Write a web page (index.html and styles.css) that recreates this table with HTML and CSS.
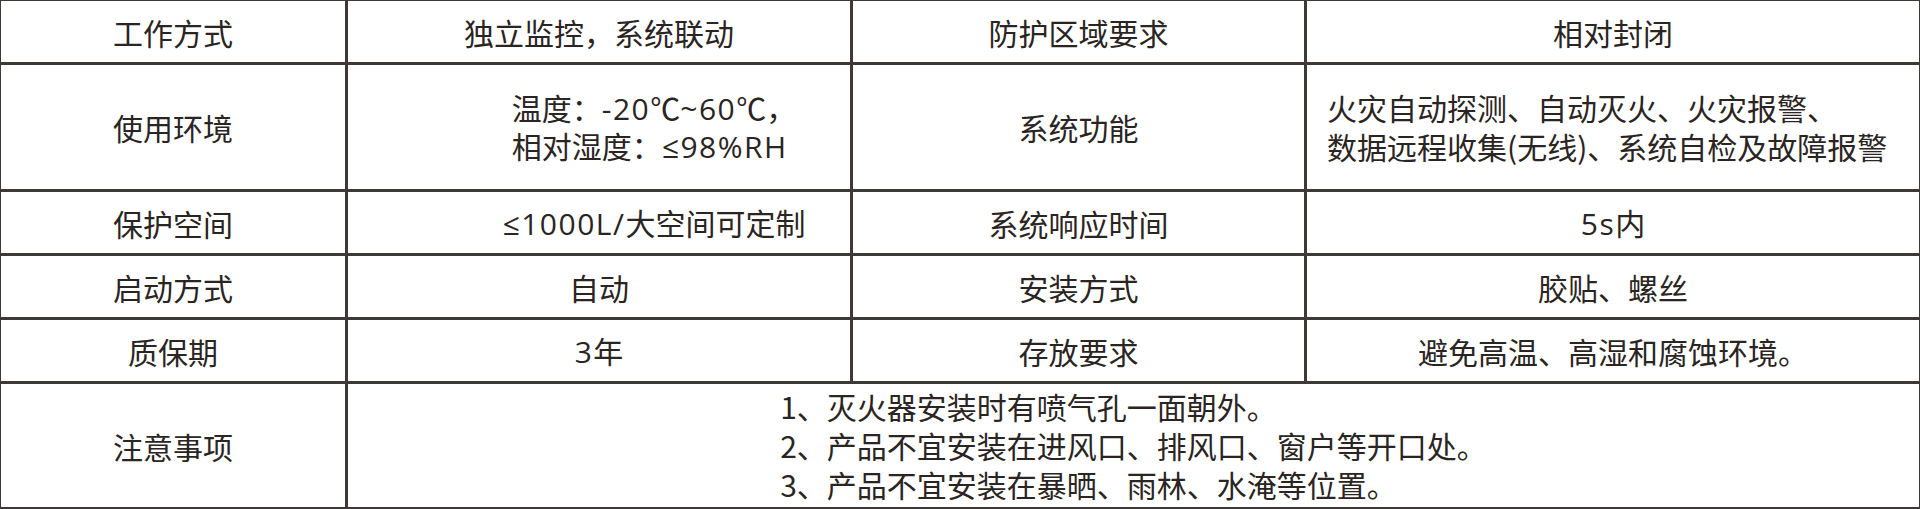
FILE: index.html
```html
<!DOCTYPE html>
<html lang="zh-CN">
<head>
<meta charset="utf-8">
<title>参数表</title>
<link rel="stylesheet" href="styles.css">
</head>
<body>
<table class="spec">
  <colgroup>
    <col class="c1"><col class="c2"><col class="c3"><col class="c4">
  </colgroup>
  <tbody>
    <tr class="r1">
      <td>工作方式</td>
      <td>独立监控，系统联动</td>
      <td>防护区域要求</td>
      <td>相对封闭</td>
    </tr>
    <tr class="r2">
      <td>使用环境</td>
      <td class="shift"><div class="block">温度：<span class="lat">-20</span>℃<span class="lat">~60</span>℃，<br>相对湿度：<span class="lat">≤98%RH</span></div></td>
      <td>系统功能</td>
      <td class="left"><div class="lines">火灾自动探测、自动灭火、火灾报警、<br>数据远程收集(无线)、系统自检及故障报警</div></td>
    </tr>
    <tr class="r3">
      <td>保护空间</td>
      <td class="shift"><span class="lat">≤1000L/</span>大空间可定制</td>
      <td>系统响应时间</td>
      <td><span class="lat">5s</span>内</td>
    </tr>
    <tr class="r4">
      <td>启动方式</td>
      <td>自动</td>
      <td>安装方式</td>
      <td>胶贴、螺丝</td>
    </tr>
    <tr class="r5">
      <td>质保期</td>
      <td><span class="lat">3</span>年</td>
      <td>存放要求</td>
      <td>避免高温、高湿和腐蚀环境。</td>
    </tr>
    <tr class="r6">
      <td>注意事项</td>
      <td colspan="3"><div class="block notes">1、灭火器安装时有喷气孔一面朝外。<br>2、产品不宜安装在进风口、排风口、窗户等开口处。<br>3、产品不宜安装在暴晒、雨林、水淹等位置。</div></td>
    </tr>
  </tbody>
</table>
</body>
</html>
```

FILE: styles.css
```css
html, body {
  margin: 0;
  padding: 0;
  background: #ffffff;
}

body {
  width: 1920px;
  height: 509px;
  overflow: hidden;
  font-family: "Noto Sans CJK SC", "Noto Sans", "Liberation Sans", sans-serif;
  color: #2a2422;
}

.spec {
  border-collapse: collapse;
  table-layout: fixed;
  width: 1921px;
  margin: -2px 0 0 -2px;
  font-size: 30px;
  line-height: 36px;
}

.c1 { width: 347px; }
.c2 { width: 505px; }
.c3 { width: 454px; }
.c4 { width: 615px; }

.spec td {
  border: 3px solid #3e3837;
  padding: 0;
  text-align: center;
  vertical-align: middle;
  white-space: nowrap;
}

.r1 td { height: 61px; }
.r2 td { height: 124px; }
.r3 td { height: 61px; }
.r4 td { height: 61px; }
.r5 td { height: 61px; }
.r6 td { height: 123px; }

.lat {
  font-family: "Open Sans", "DejaVu Sans", "Noto Sans CJK SC", sans-serif;
  letter-spacing: 1.5px;
}

.block {
  display: inline-block;
  text-align: left;
}

.r2 .block { line-height: 37px; }

.spec td.shift {
  padding-left: 110px;
}

.spec td.left {
  text-align: left;
  padding-left: 20px;
}

.lines { line-height: 39px; }

.notes {
  line-height: 39px;
}
```
